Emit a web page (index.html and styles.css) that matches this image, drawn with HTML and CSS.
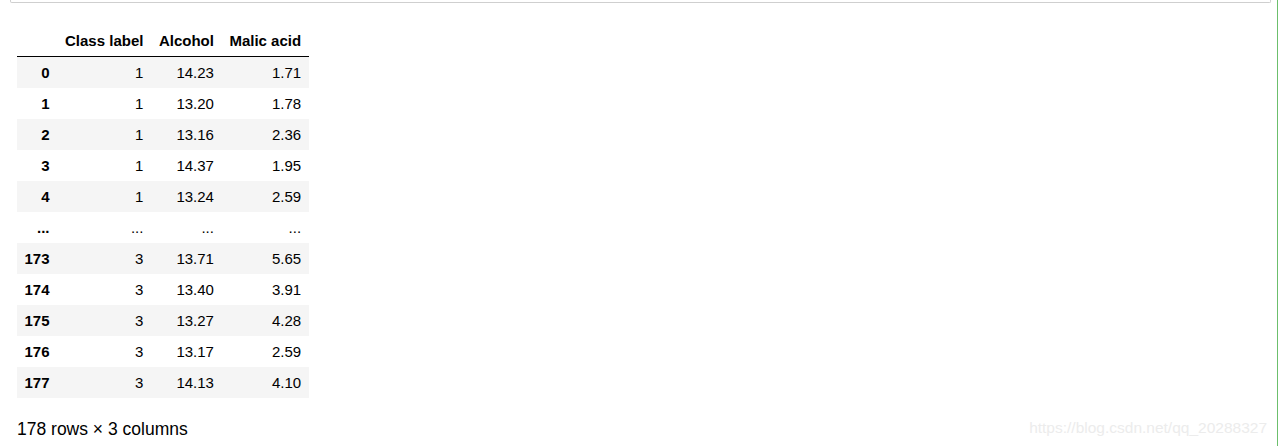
FILE: index.html
```html
<!DOCTYPE html>
<html lang="en">
<head>
    <meta charset="UTF-8">
    <title>Wine dataframe</title>
    <link rel="stylesheet" href="styles.css">
</head>
<body>
    <div class="page">
        <div class="cell-top"></div>
        <div class="output">
            <table class="dataframe">
                <thead>
                    <tr>
                        <th></th>
                        <th>Class label</th>
                        <th>Alcohol</th>
                        <th>Malic acid</th>
                    </tr>
                </thead>
                <tbody>
                    <tr><th>0</th><td>1</td><td>14.23</td><td>1.71</td></tr>
                    <tr><th>1</th><td>1</td><td>13.20</td><td>1.78</td></tr>
                    <tr><th>2</th><td>1</td><td>13.16</td><td>2.36</td></tr>
                    <tr><th>3</th><td>1</td><td>14.37</td><td>1.95</td></tr>
                    <tr><th>4</th><td>1</td><td>13.24</td><td>2.59</td></tr>
                    <tr><th>...</th><td>...</td><td>...</td><td>...</td></tr>
                    <tr><th>173</th><td>3</td><td>13.71</td><td>5.65</td></tr>
                    <tr><th>174</th><td>3</td><td>13.40</td><td>3.91</td></tr>
                    <tr><th>175</th><td>3</td><td>13.27</td><td>4.28</td></tr>
                    <tr><th>176</th><td>3</td><td>13.17</td><td>2.59</td></tr>
                    <tr><th>177</th><td>3</td><td>14.13</td><td>4.10</td></tr>
                </tbody>
            </table>
            <p class="shape">178 rows × 3 columns</p>
        </div>
        <div class="watermark">https://blog.csdn.net/qq_20288327</div>
    </div>
</body>
</html>
```

FILE: styles.css
```css
body {
    margin: 0;
    font-family: "Liberation Sans", Arial, sans-serif;
    color: #000;
    background-color: #fff;
}
.page {
    position: relative;
    height: 446px;
    margin-right: 1px;
    border-right: 1px solid #6cbf6c;
    box-sizing: border-box;
    overflow: hidden;
}
.cell-top {
    height: 2px;
    margin: 0 6px 0 10px;
    border: 1px solid #cfcfcf;
    border-top: none;
    border-radius: 0 0 2px 2px;
}
.output {
    padding: 22px 0 0 17px;
}
.dataframe {
    border-collapse: collapse;
    border: none;
    font-size: 15px;
}
.dataframe th, .dataframe td {
    padding: 7px 8px 7px 7.5px;
    line-height: 17px;
    text-align: right;
    vertical-align: middle;
    white-space: nowrap;
}
.dataframe th {
    font-weight: bold;
}
.dataframe thead th {
    border-bottom: 1px solid #000;
}
.dataframe tbody tr:nth-child(odd) {
    background-color: #f5f5f5;
}
.shape {
    margin: 21px 0 0;
    font-size: 17.5px;
    color: #000;
}
.watermark {
    position: absolute;
    right: 10px;
    bottom: 9px;
    font-size: 15.5px;
    color: #ececec;
}
```
